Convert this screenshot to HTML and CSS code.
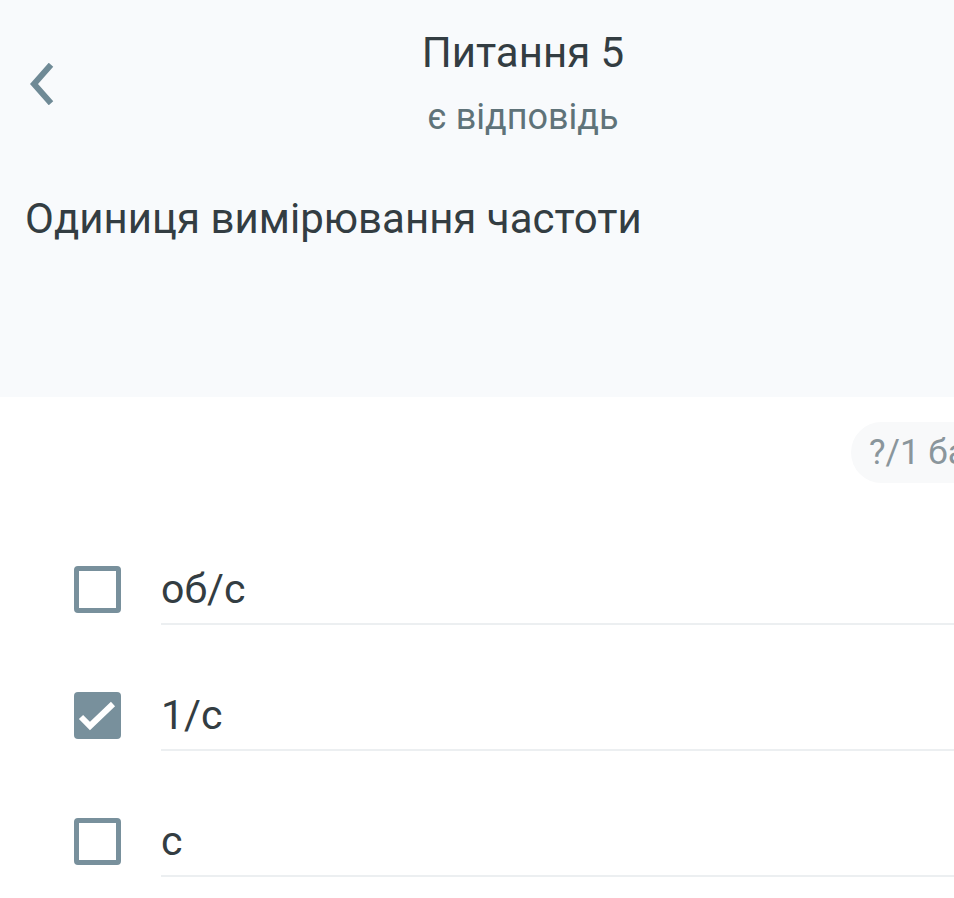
FILE: index.html
```html
<!DOCTYPE html>
<html>
<head lang="uk">
    <meta charset="UTF-8">
    <title>Питання 5</title>
    <link rel="stylesheet" href="styles.css">
</head>
<body>
<div class="page">
    <div class="head">
        <div class="top">
            <a class="back" href="#">
                <svg width="30" height="42" viewBox="0 0 30 42">
                    <path d="M21 4 L6 21 L21 38" fill="none" stroke="#6f8a96" stroke-width="6" stroke-linecap="square"/>
                </svg>
            </a>
            <div class="titles">
                <div class="title">Питання 5</div>
                <div class="sub">є відповідь</div>
            </div>
            <div></div>
        </div>
        <div class="question">Одиниця вимірювання частоти</div>
    </div>
    <div class="score">
        <span class="badge">?/1 бал</span>
    </div>
    <ul class="answers">
        <li>
            <span class="box"></span>
            <span class="label">об/с</span>
        </li>
        <li>
            <span class="box on">
                <svg width="47" height="47" viewBox="0 0 47 47">
                    <path d="M7 25 L16 34 L39 12" fill="none" stroke="#fff" stroke-width="6"/>
                </svg>
            </span>
            <span class="label">1/с</span>
        </li>
        <li>
            <span class="box"></span>
            <span class="label">с</span>
        </li>
    </ul>
</div>
</body>
</html>
```

FILE: styles.css
```css
*{
    margin: 0;
    padding: 0;
    list-style: none;
    box-sizing: border-box;
}
body{
    overflow: hidden;
    background: #fff;
    font-family: Roboto, "Noto Sans", sans-serif;
    color: #333d42;
}
.page{
    width: 1046px;
}
.head{
    background: #f8fafc;
    height: 397px;
    padding-top: 28px;
}
.top{
    display: grid;
    grid-template-columns: 1fr auto 1fr;
    align-items: center;
}
.back{
    display: flex;
    padding-left: 28px;
    padding-top: 2px;
}
.titles{
    text-align: center;
}
.title{
    font-size: 42px;
    line-height: 50px;
}
.sub{
    margin-top: 19px;
    font-size: 36px;
    line-height: 40px;
    color: #5f7379;
}
.question{
    margin-top: 58px;
    padding-left: 25px;
    font-size: 42px;
    line-height: 48px;
}
.score{
    display: flex;
    justify-content: flex-end;
    padding: 25px 25px 0 0;
}
.badge{
    width: 170px;
    height: 61px;
    padding-left: 18px;
    border-radius: 31px;
    background: #f8f9fa;
    color: #8a969c;
    font-size: 35px;
    line-height: 61px;
}
.answers{
    padding: 82px 0 0 74px;
}
.answers li{
    display: flex;
    align-items: flex-start;
    margin-bottom: 66px;
}
.box{
    width: 47px;
    height: 47px;
    margin-top: 1px;
    border: 5px solid #78909c;
    border-radius: 4px;
    display: flex;
    align-items: center;
    justify-content: center;
}
.box.on{
    background: #78909c;
    border: none;
}
.label{
    flex: 1;
    margin-left: 40px;
    font-size: 41px;
    line-height: 48px;
    padding-bottom: 10px;
    border-bottom: 2px solid #eceff1;
}
```
